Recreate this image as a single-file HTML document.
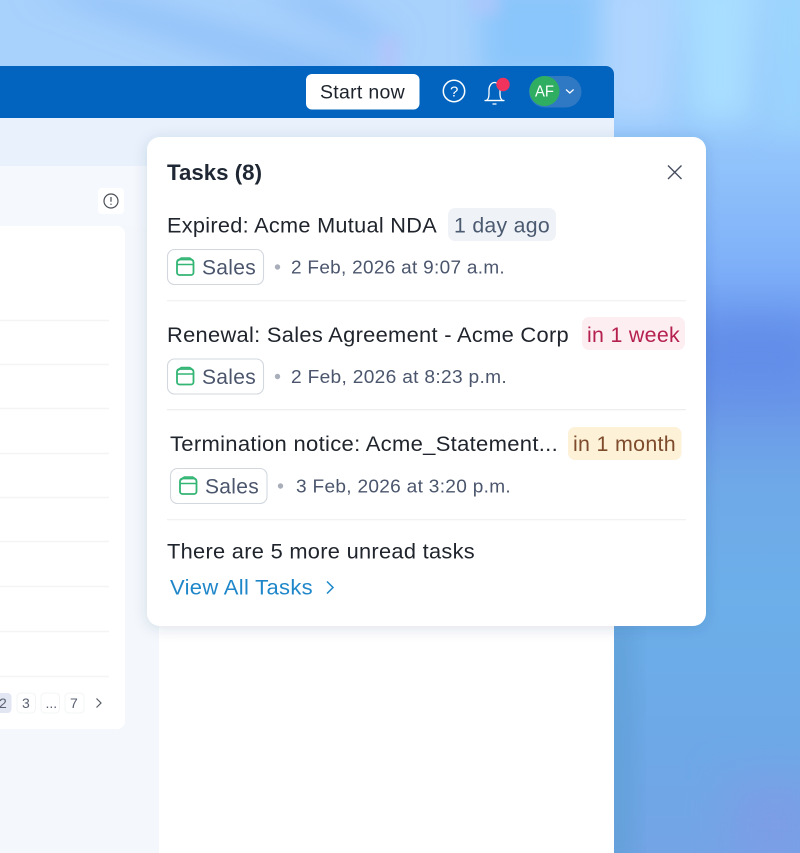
<!DOCTYPE html>
<html><head><meta charset="utf-8"><style>
html,body{margin:0;padding:0;background:#8fc0f8}
body{width:800px;height:853px;overflow:hidden;position:relative}
svg{position:absolute;left:0;top:0;display:block}
text{font-family:"Liberation Sans",sans-serif}
.s{letter-spacing:.3px}
</style></head><body>
<svg width="800" height="853" viewBox="0 0 800 853" xmlns="http://www.w3.org/2000/svg">
<defs>
<linearGradient id="rg" x1="0" y1="0" x2="0" y2="1">
<stop offset="0" stop-color="#a4d4fe"/><stop offset=".15" stop-color="#97c9fc"/><stop offset=".3" stop-color="#80b2f9"/><stop offset=".4" stop-color="#6b98ef"/><stop offset=".47" stop-color="#6a97e8"/><stop offset=".57" stop-color="#6fa9e8"/><stop offset=".7" stop-color="#6cafe9"/><stop offset=".85" stop-color="#6da9e7"/><stop offset="1" stop-color="#73a4e6"/>
</linearGradient>
<filter id="b1" x="-60%" y="-60%" width="220%" height="220%"><feGaussianBlur stdDeviation="14"/></filter>
<filter id="b3" x="-60%" y="-60%" width="220%" height="220%"><feGaussianBlur stdDeviation="6"/></filter>
<filter id="b2" x="-50%" y="-50%" width="200%" height="200%"><feGaussianBlur stdDeviation="22"/></filter>
<filter id="sh" x="-20%" y="-20%" width="140%" height="140%"><feDropShadow dx="0" dy="2" stdDeviation="7" flood-color="#22406e" flood-opacity=".16"/></filter>
<clipPath id="top"><rect width="800" height="853"/></clipPath>
</defs>
<rect width="800" height="853" fill="url(#rg)"/>
<g clip-path="url(#top)">
<rect x="0" y="0" width="620" height="70" fill="#a8d1fc"/>
<path d="M30 -10L100 -10L390 70L310 90Z" fill="#93c2f9" filter="url(#b1)"/>
<path d="M250 -10L330 -10L400 40L370 50Z" fill="#95c4fa" filter="url(#b1)"/>
<rect x="480" y="-20" width="150" height="100" fill="#8ac6fb" filter="url(#b1)"/>
<rect x="378" y="36" width="22" height="40" fill="#b4c3fb" opacity=".7" filter="url(#b3)"/>
<rect x="470" y="-10" width="30" height="26" fill="#b4c6fb" opacity=".6" filter="url(#b3)"/>
<rect x="600" y="-20" width="70" height="140" fill="#b0d5fe" filter="url(#b1)"/>
<rect x="690" y="-20" width="60" height="140" fill="#a8deff" filter="url(#b1)"/>
<rect x="770" y="-20" width="40" height="150" fill="#9ad4fd" filter="url(#b1)"/>
<rect x="690" y="320" width="130" height="70" fill="#628de8" filter="url(#b2)"/>
<rect x="604" y="620" width="26" height="250" fill="#5e9fd6" filter="url(#b1)"/>
<rect x="730" y="780" width="90" height="90" fill="#7c9ee6" filter="url(#b2)"/>
</g>

<!-- app window -->
<path d="M0 66H606a8 8 0 0 1 8 8V853H0Z" fill="#ffffff"/>
<path d="M0 66H606a8 8 0 0 1 8 8V118H0Z" fill="#0264be"/>
<rect x="0" y="118" width="614" height="48" fill="#e9f2fc"/>
<rect x="0" y="166" width="159" height="687" fill="#f4f8fc"/>
<rect x="0" y="166" width="159" height="60" fill="#f5f8fd"/>
<rect x="-10" y="226" width="135" height="503" rx="8" fill="#ffffff"/>
<g stroke="#f3f4f6" stroke-width="1.400">
<path d="M0 320.500H109M0 364.500H109M0 408.500H109M0 453.500H109M0 497.500H109M0 541.500H109M0 586.500H109M0 631.500H109M0 676.500H109"/>
</g>
<rect x="98" y="188" width="26" height="26" rx="4" fill="#ffffff"/>
<circle cx="111" cy="201" r="7" fill="none" stroke="#4b4f58" stroke-width="1.2"/>
<path d="M111 197v4.800M111 203.600v1.300" stroke="#4b4f58" stroke-width="1.2" fill="none"/>

<!-- pagination -->
<rect x="-8" y="693" width="19.500" height="20" rx="4" fill="#e2e6f3"/>
<rect x="17" y="693" width="18.500" height="20" rx="4" fill="#fff" stroke="#f3f4f6"/>
<rect x="41" y="693" width="18.500" height="20" rx="4" fill="#fff" stroke="#f3f4f6"/>
<rect x="65" y="693" width="19" height="20" rx="4" fill="#fff" stroke="#f3f4f6"/>
<text x="-1" y="708" font-size="14" fill="#5a6172">2</text>
<text x="22" y="708" font-size="14" fill="#5a6172">3</text>
<text x="45.500" y="708" font-size="14" fill="#5a6172">...</text>
<text x="70" y="708" font-size="14" fill="#5a6172">7</text>
<path d="M96.500 698.500l4.500 4.500-4.500 4.500" fill="none" stroke="#565b66" stroke-width="1.200"/>

<!-- header controls -->
<rect x="306" y="74" width="113.500" height="35.500" rx="6" fill="#fff"/>
<text x="320" y="98.500" font-size="19.500" class="s" fill="#1d232c" textLength="85" lengthAdjust="spacingAndGlyphs">Start now</text>
<circle cx="454" cy="91" r="10.700" fill="none" stroke="#fff" stroke-width="1.500"/>
<text x="450" y="96.500" font-size="15" fill="#fff">?</text>
<path d="M486.500 100.500c1.800-1.500 2.500-3 2.500-7v-3.500c0-4 2.400-7.500 5.500-7.500s5.500 3.500 5.500 7.500v3.500c0 4 .7 5.500 2.500 7Z" fill="none" stroke="#fff" stroke-width="1.300"/>
<path d="M484.500 100.500h20M492.500 104h4" stroke="#fff" stroke-width="1.300" fill="none"/>
<circle cx="503" cy="84.500" r="6.700" fill="#f0335c"/>
<rect x="529" y="76" width="52.500" height="31.500" rx="15.700" fill="#2f78c3"/>
<circle cx="544.500" cy="91" r="15" fill="#2fae62"/>
<text x="535" y="96.500" font-size="15.500" fill="#fff" textLength="19" lengthAdjust="spacingAndGlyphs">AF</text>
<path d="M566 89.500l3.800 3.500 3.800-3.500" fill="none" stroke="#fff" stroke-width="1.200"/>

<!-- panel -->
<rect x="147" y="137" width="559" height="489" rx="13" fill="#fff" filter="url(#sh)"/>
<text x="167" y="180" font-size="22" font-weight="bold" fill="#1e2733" textLength="95" lengthAdjust="spacingAndGlyphs">Tasks (8)</text>
<path d="M668 165.500l13.500 13.500M681.500 165.500L668 179" stroke="#464d5f" stroke-width="1.400" fill="none"/>

<!-- row 1 -->
<text x="167" y="232.500" font-size="21.500" class="s" fill="#20252d" textLength="270" lengthAdjust="spacingAndGlyphs">Expired: Acme Mutual NDA</text>
<rect x="448" y="208" width="108" height="33" rx="7" fill="#eff3f7"/>
<text x="454" y="232.500" font-size="21.500" class="s" fill="#4b5a70" textLength="96" lengthAdjust="spacingAndGlyphs">1 day ago</text>
<rect x="167.500" y="249.500" width="96" height="35" rx="7" fill="#fff" stroke="#d3d8df" stroke-width="1.100"/>
<g fill="none" stroke="#33b574" stroke-width="1.800"><rect x="177" y="259.500" width="16.500" height="15.500" rx="2.500"/><path d="M177 264.500h16.500M181 258h9M181 258l-3 3M190 258l3 3" stroke-width="1.600"/></g>
<text x="202" y="274.500" font-size="21.500" class="s" fill="#4b566d" textLength="54" lengthAdjust="spacingAndGlyphs">Sales</text>
<circle cx="277.500" cy="267" r="2.700" fill="#a9aebb"/>
<text x="291" y="273.500" font-size="18.500" class="s" fill="#4b566d" textLength="214" lengthAdjust="spacingAndGlyphs">2 Feb, 2026 at 9:07 a.m.</text>
<rect x="167" y="300" width="519" height="1.300" fill="#f2f2f4"/>

<!-- row 2 -->
<text x="167" y="342" font-size="21.500" class="s" fill="#20252d" textLength="402" lengthAdjust="spacingAndGlyphs">Renewal: Sales Agreement - Acme Corp</text>
<rect x="582" y="317" width="103" height="33" rx="7" fill="#fdeef2"/>
<text x="587" y="342" font-size="21.500" class="s" fill="#b5214f" textLength="93" lengthAdjust="spacingAndGlyphs">in 1 week</text>
<rect x="167.500" y="359" width="96" height="35" rx="7" fill="#fff" stroke="#d3d8df" stroke-width="1.100"/>
<g fill="none" stroke="#33b574" stroke-width="1.800"><rect x="177" y="369" width="16.500" height="15.500" rx="2.500"/><path d="M177 374h16.500M181 367.500h9M181 367.500l-3 3M190 367.500l3 3" stroke-width="1.600"/></g>
<text x="202" y="384" font-size="21.500" class="s" fill="#4b566d" textLength="54" lengthAdjust="spacingAndGlyphs">Sales</text>
<circle cx="277.500" cy="376.500" r="2.700" fill="#a9aebb"/>
<text x="291" y="383" font-size="18.500" class="s" fill="#4b566d" textLength="216" lengthAdjust="spacingAndGlyphs">2 Feb, 2026 at 8:23 p.m.</text>
<rect x="167" y="409" width="519" height="1.300" fill="#eeeef1"/>

<!-- row 3 -->
<text x="170" y="451" font-size="21.500" class="s" fill="#20252d" textLength="388" lengthAdjust="spacingAndGlyphs">Termination notice: Acme_Statement...</text>
<rect x="568" y="427" width="113.500" height="33" rx="7" fill="#fdf1d8"/>
<text x="573" y="451" font-size="21.500" class="s" fill="#7e4c2c" textLength="103" lengthAdjust="spacingAndGlyphs">in 1 month</text>
<rect x="170.500" y="468.500" width="96.500" height="35" rx="7" fill="#fff" stroke="#d3d8df" stroke-width="1.100"/>
<g fill="none" stroke="#33b574" stroke-width="1.800"><rect x="180" y="478.500" width="16.500" height="15.500" rx="2.500"/><path d="M180 483.500h16.500M184 477h9M184 477l-3 3M193 477l3 3" stroke-width="1.600"/></g>
<text x="205" y="493.500" font-size="21.500" class="s" fill="#4b566d" textLength="54" lengthAdjust="spacingAndGlyphs">Sales</text>
<circle cx="280.500" cy="486" r="2.700" fill="#a9aebb"/>
<text x="296" y="492.500" font-size="18.500" class="s" fill="#4b566d" textLength="215" lengthAdjust="spacingAndGlyphs">3 Feb, 2026 at 3:20 p.m.</text>
<rect x="167" y="519" width="519" height="1.300" fill="#f2f2f4"/>

<!-- footer -->
<text x="167" y="558.500" font-size="21.500" class="s" fill="#20252d" textLength="308" lengthAdjust="spacingAndGlyphs">There are 5 more unread tasks</text>
<text x="170" y="594.500" font-size="21.500" class="s" fill="#1f87c9" textLength="143" lengthAdjust="spacingAndGlyphs">View All Tasks</text>
<path d="M327 581.500l6 6-6 6" fill="none" stroke="#1f87c9" stroke-width="1.500"/>
</svg>
</body></html>
